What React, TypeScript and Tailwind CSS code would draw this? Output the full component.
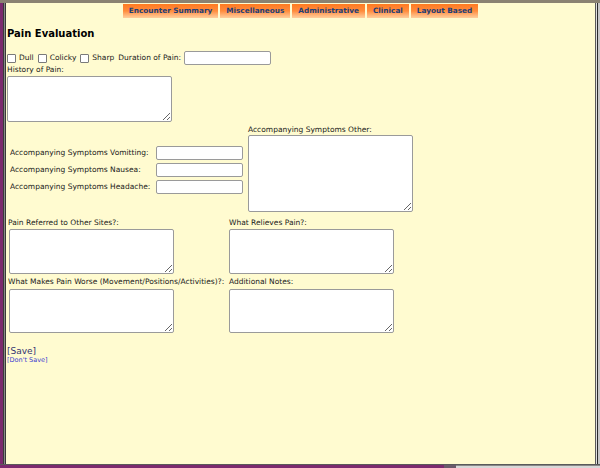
const tabs = ['Encounter Summary', 'Miscellaneous', 'Administrative', 'Clinical', 'Layout Based'];

const font = { fontFamily: '"DejaVu Sans", Verdana, sans-serif' };

function TextBox({ w = 'w-[87px]' }: { w?: string }) {
    return <input type="text" className={`${w} h-[14px] bg-white border border-[#9a9a9a] rounded-[2px] outline-none`} />;
}

function Area({ className }: { className: string }) {
    return <textarea className={`${className} block bg-white border border-[#9a9a9a] rounded-[2px] outline-none`} />;
}

function Check({ label }: { label: string }) {
    return (
        <span className="flex items-center gap-[3px] mr-[4px]">
            <span className="w-[9px] h-[9px] bg-white border border-[#7a7a7a] rounded-[1px]" />
            <span>{label}</span>
        </span>
    );
}

export default function App() {
    return (
        <div className="w-[600px] h-[468px] flex flex-col bg-[#8a8272] text-[7.5px] text-[#1a1a1a] leading-[10px] whitespace-nowrap" style={font}>
            <div className="flex flex-1 mt-[3px] min-h-0">
                <div className="w-[3px] bg-[#7b2a6e]" />
                <div className="w-[1px] bg-[#3a3a3a]" />
                <div className="w-[1px] bg-[#8a8a8a]" />
                <div className="w-[1px] bg-[#3a3a3a]" />
                <div className="flex-1 bg-[#fffbd0] flex flex-col">
                    <div className="flex justify-center gap-[2px] mt-[1px]">
                        {tabs.map((t) => (
                            <div
                                key={t}
                                className="h-[14px] px-[6px] flex items-center font-bold text-[7.3px] text-[#1d3f78] bg-linear-to-b from-[#ff7a20] via-[#ff8c3c] to-[#ffcf9c]"
                            >
                                {t}
                            </div>
                        ))}
                    </div>

                    <div className="pl-[1px]">
                        <h1 className="mt-[10px] text-[10px] font-bold leading-[12px] text-black">Pain Evaluation</h1>

                        <div className="flex items-center mt-[11px] h-[14px]">
                            <Check label="Dull" />
                            <Check label="Colicky" />
                            <Check label="Sharp" />
                            <span className="mr-[3px]">Duration of Pain:</span>
                            <TextBox />
                        </div>

                        <div>History of Pain:</div>
                        <Area className="mt-[1px] w-[165px] h-[46px]" />

                        <div className="flex mt-[3px]">
                            <div className="w-[241px] flex flex-col justify-center gap-[3px] pl-[3px] pt-[2px]">
                                {['Vomitting', 'Nausea', 'Headache'].map((s) => (
                                    <div key={s} className="flex items-center">
                                        <span className="w-[146px]">Accompanying Symptoms {s}:</span>
                                        <TextBox />
                                    </div>
                                ))}
                            </div>
                            <div>
                                <div>Accompanying Symptoms Other:</div>
                                <Area className="w-[165px] h-[77px]" />
                            </div>
                        </div>

                        <div className="grid grid-cols-[221px_1fr] mt-[6px] pl-[1px] gap-y-[3px]">
                            <div>
                                <div>Pain Referred to Other Sites?:</div>
                                <Area className="mt-[1px] ml-[1px] w-[165px] h-[45px]" />
                            </div>
                            <div>
                                <div>What Relieves Pain?:</div>
                                <Area className="mt-[1px] w-[165px] h-[45px]" />
                            </div>
                            <div>
                                <div>What Makes Pain Worse (Movement/Positions/Activities)?:</div>
                                <Area className="mt-[2px] ml-[1px] w-[165px] h-[44px]" />
                            </div>
                            <div>
                                <div>Additional Notes:</div>
                                <Area className="mt-[2px] w-[165px] h-[44px]" />
                            </div>
                        </div>

                        <div className="mt-[13px] text-[9px] leading-[10px] text-[#333370]">[Save]</div>
                        <div className="text-[6.5px] leading-[8px] text-[#3b3bd0]">[Don't Save]</div>
                    </div>
                </div>
                <div className="w-[1px] bg-[#5a5a5a]" />
                <div className="w-[1px] bg-[#e0e0e0]" />
                <div className="w-[1px] bg-[#2a2a2a]" />
                <div className="w-[2px] bg-[#c8c8c8]" />
            </div>
            <div className="h-[1px] bg-[#5a5a5a]" />
            <div className="h-[3px] flex">
                <div className="w-[444px] bg-[#7b2a6e]" />
                <div className="w-[12px] bg-[#6a5a6a]" />
                <div className="flex-1 bg-[#d8d8d8] border-t border-[#888]" />
            </div>
        </div>
    );
}
